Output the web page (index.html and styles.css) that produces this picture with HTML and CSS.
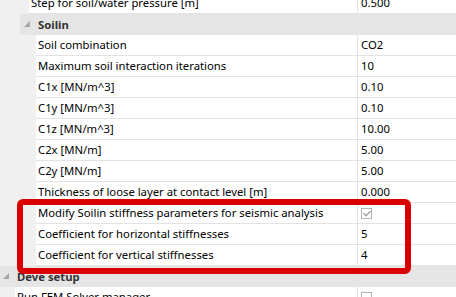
FILE: index.html
```html
<!DOCTYPE html>
<html lang="en">
  <head>
    <meta charset="UTF-8" />
    <title>Properties</title>
    <link rel="stylesheet" href="styles.css">
  </head>
  <body>
    <div class="grid">
      <div class="row lvl-step">
        <div class="name">Step for soil/water pressure [m]</div>
        <div class="value">0.500</div>
      </div>

      <div class="cat lvl-1">
        <svg class="arrow" width="6" height="6" viewBox="0 0 6 6"><polygon points="6,0 6,6 0,6" /></svg>
        <span>Soilin</span>
      </div>
      <div class="row lvl-2">
        <div class="name">Soil combination</div>
        <div class="value">CO2</div>
      </div>
      <div class="row lvl-2">
        <div class="name">Maximum soil interaction iterations</div>
        <div class="value">10</div>
      </div>
      <div class="row lvl-2">
        <div class="name">C1x [MN/m^3]</div>
        <div class="value">0.10</div>
      </div>
      <div class="row lvl-2">
        <div class="name">C1y [MN/m^3]</div>
        <div class="value">0.10</div>
      </div>
      <div class="row lvl-2">
        <div class="name">C1z [MN/m^3]</div>
        <div class="value">10.00</div>
      </div>
      <div class="row lvl-2">
        <div class="name">C2x [MN/m]</div>
        <div class="value">5.00</div>
      </div>
      <div class="row lvl-2">
        <div class="name">C2y [MN/m]</div>
        <div class="value">5.00</div>
      </div>
      <div class="row lvl-2">
        <div class="name">Thickness of loose layer at contact level [m]</div>
        <div class="value">0.000</div>
      </div>
      <div class="row lvl-2">
        <div class="name">Modify Soilin stiffness parameters for seismic analysis</div>
        <div class="value"><span class="check checked"></span></div>
      </div>
      <div class="row lvl-2">
        <div class="name">Coefficient for horizontal stiffnesses</div>
        <div class="value">5</div>
      </div>
      <div class="row lvl-2">
        <div class="name">Coefficient for vertical stiffnesses</div>
        <div class="value">4</div>
      </div>

      <div class="cat lvl-0">
        <svg class="arrow" width="6" height="6" viewBox="0 0 6 6"><polygon points="6,0 6,6 0,6" /></svg>
        <span>Deve setup</span>
      </div>
      <div class="row lvl-1b">
        <div class="name">Run FEM Solver manager</div>
        <div class="value"><span class="check"></span></div>
      </div>

      <!-- annotation drawn over the grid -->
      <div class="highlight"></div>
    </div>
  </body>
</html>
```

FILE: styles.css
```css
body {
  margin: 0;
  background: #f0f0f0;
  font-family: "Segoe UI", "Noto Sans", sans-serif;
  font-size: 11.3px;
  color: #000;
  overflow: hidden;
}

.grid {
  position: relative;
  margin-top: -7px;
}

.row {
  display: grid;
  grid-template-columns: 1fr 98px;
  height: 21px;
  box-sizing: border-box;
  background: #fff;
  border-bottom: 1px solid #e3e3e3;
}

.row .name {
  padding-left: 2px;
  line-height: 20px;
  white-space: nowrap;
  overflow: hidden;
  border-right: 1px solid #e3e3e3;
}

.row .value {
  padding-left: 3px;
  line-height: 20px;
  display: flex;
  align-items: center;
}

.lvl-step {
  margin-left: 29px;
}

.lvl-2 {
  margin-left: 36px;
}

.lvl-1b {
  margin-left: 15px;
}

.cat {
  display: flex;
  align-items: center;
  height: 21px;
  background: #e5e5e5;
  font-weight: bold;
  color: #333;
}

.cat.lvl-1 {
  margin-left: 20px;
  padding-left: 4px;
}

.cat.lvl-0 {
  padding-left: 3px;
}

.cat .arrow {
  fill: #a6a6a6;
  margin-right: 8px;
  margin-top: -1px;
}

.check {
  width: 11px;
  height: 11px;
  box-sizing: border-box;
  border: 1px solid #b4b4b4;
  background: #fff;
  position: relative;
}

.check.checked::after {
  content: "";
  position: absolute;
  left: 3px;
  top: 0px;
  width: 3px;
  height: 6px;
  border: solid #8a8a8a;
  border-width: 0 1.5px 1.5px 0;
  transform: rotate(45deg);
}

.highlight {
  position: absolute;
  left: 17px;
  top: 206px;
  width: 394px;
  height: 75px;
  box-sizing: border-box;
  border: 6px solid #da0000;
  border-radius: 6px;
}
```
